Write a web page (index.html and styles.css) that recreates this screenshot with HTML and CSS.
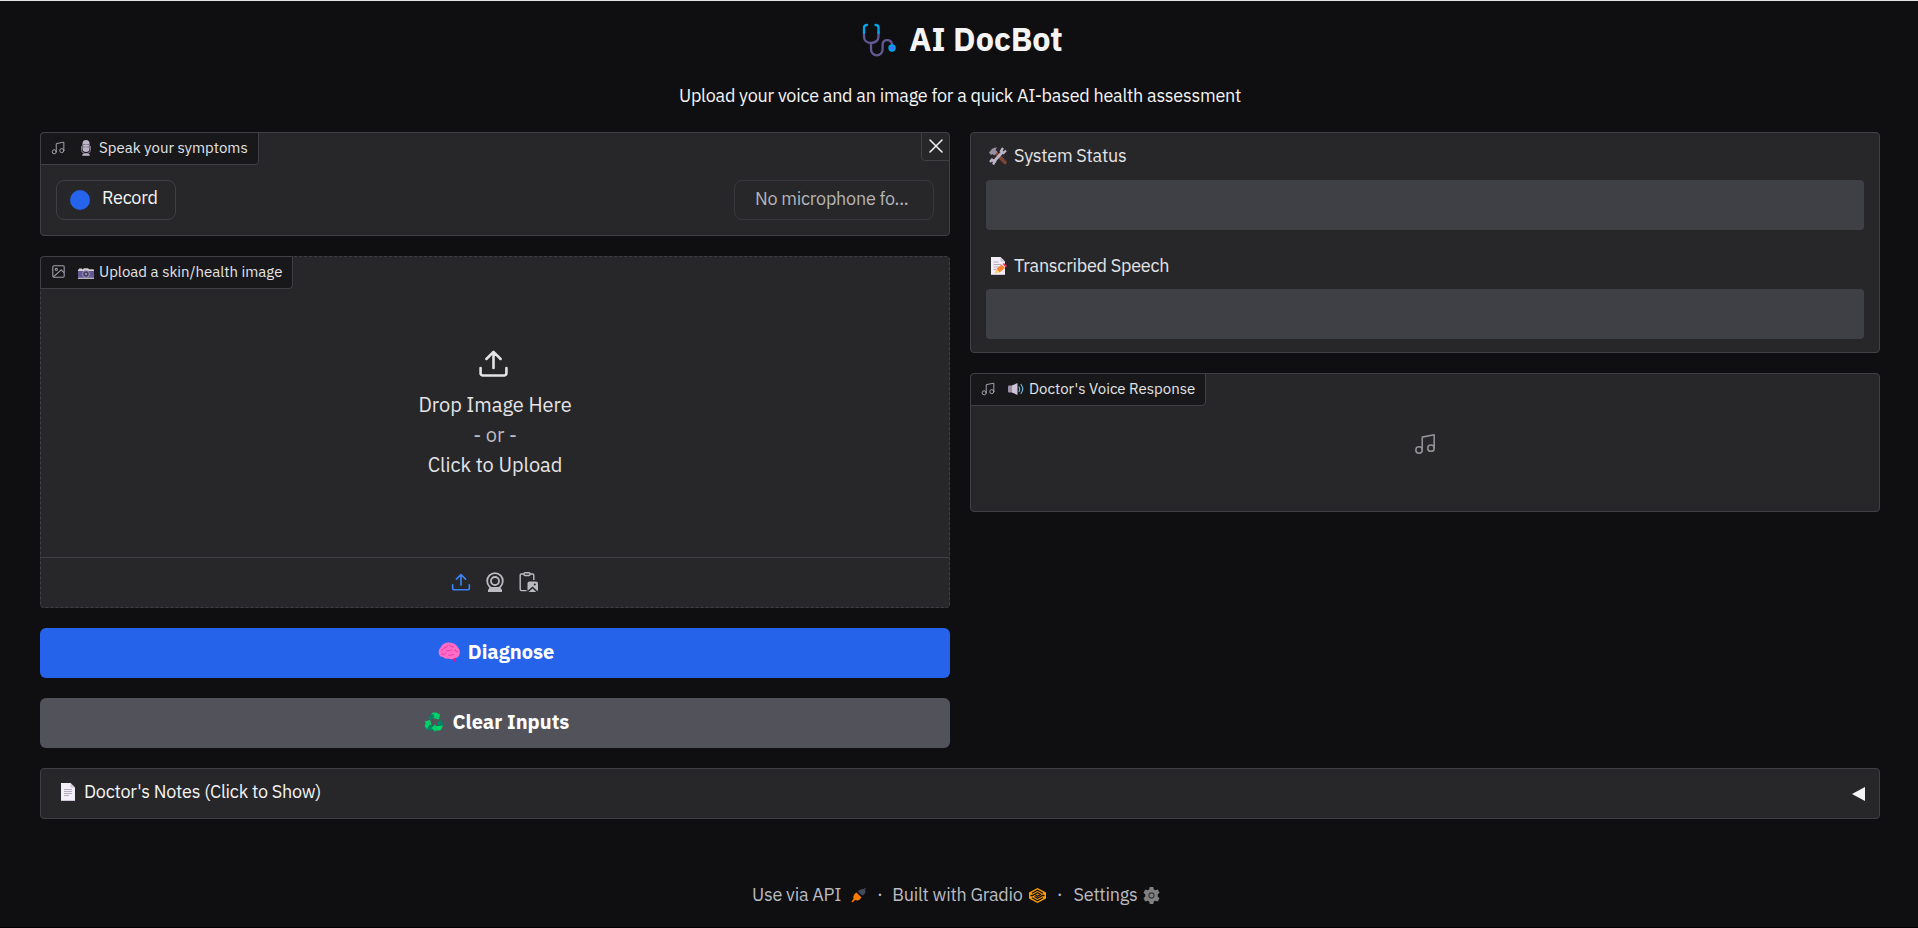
FILE: index.html
```
<!DOCTYPE html>
<html lang="en">
<head>
<meta charset="utf-8">
<title>AI DocBot</title>
<link rel="stylesheet" href="styles.css">
</head>
<body>
<svg class="defs" width="0" height="0">
  <symbol id="music" viewBox="0 0 24 24" fill="none" stroke="currentColor" stroke-width="1.700" stroke-linecap="round" stroke-linejoin="round"><path d="M9 18V4.500L22 2v14"/><circle cx="5.500" cy="18.500" r="3.500"/><circle cx="18.500" cy="16.500" r="3.500"/></symbol>
  <symbol id="upload" viewBox="0 0 24 24" fill="none" stroke="currentColor" stroke-width="2" stroke-linecap="round" stroke-linejoin="round"><path d="M12 15.500V3.200M6.500 8.500 12 3l5.500 5.500M2 15.500V19.500A1.800 1.800 0 0 0 3.800 21.300H20.200A1.800 1.800 0 0 0 22 19.500V15.500"/></symbol>
</svg>
<header class="header">
  <h1 class="title">
    <svg class="steth" viewBox="0 0 34 34" fill="none" stroke-width="2.300" stroke-linecap="round"><path stroke="#635994" d="M2 10v3.500C2 17.500 5 20 9 20S16.500 17.500 16.500 13.500V10M9 20.500v6a5.800 5.800 0 0 0 11.600 0V22c0-6 8-6.500 9.500-1"/><path stroke="#00a6ed" d="M5 2C3 2 2 3 2 4.500V10M13.500 2c2 0 3 1 3 2.500V10"/><circle cx="30" cy="25" r="2.800" fill="#4a6cff" stroke="#00a6ed" stroke-width="1.700"/></svg>
    <span>AI DocBot</span>
  </h1>
  <p class="subtitle"><span>Upload your voice and an image for a quick AI-based health assessment</span></p>
</header>
<main class="columns">
  <section class="column">
    <div class="block audio">
      <div class="label">
        <svg class="label-icon"><use href="#music"/></svg>
        <svg class="emoji" viewBox="0 0 16 16"><path fill="#7d7387" d="M3 6h1v3a4 4 0 0 0 8 0V6h1v3a5 5 0 0 1-4.300 5H11.500v2h-7v-2H7.300A5 5 0 0 1 3 9z"/><rect x="4.500" y="0" width="7" height="12" rx="3.500" fill="#bdb4c7"/><path stroke="#80768b" d="M4.500 4.500h3M8.500 4.500h3M4.500 7h3M8.500 7h3"/><path fill="#bdb4c7" d="M5.500 13.500h5l1.500 2H4z"/></svg>
        <span class="label-text">Speak your symptoms</span>
      </div>
      <button class="close"><svg viewBox="0 0 14 14" stroke="currentColor" stroke-width="1.500" stroke-linecap="round"><path d="M1 1l12 12M13 1 1 13"/></svg></button>
      <div class="controls">
        <button class="record"><i class="dot"></i><span>Record</span></button>
        <button class="mic"><span>No microphone fo...</span></button>
      </div>
    </div>
    <div class="block image">
      <div class="label">
        <svg class="label-icon image-icon" viewBox="0 0 24 24" fill="none" stroke="currentColor" stroke-width="2" stroke-linejoin="round"><rect x="1.500" y="1.500" width="21" height="21" rx="2"/><circle cx="8" cy="8" r="2"/><path d="M22 14l-5-5L2.500 22"/></svg>
        <svg class="emoji camera" viewBox="0 0 16 16"><path fill="#d3cfd8" d="M0 6.500V5q0-.7 1-.7V3.500h3v.8h1l1-1h4l1 1H15q1 0 1 1v1.200z"/><path fill="#635994" d="M0 6h16v7H0z"/><path fill="#e3dfe8" d="M0 12.800h16v1H0z"/><circle cx="8" cy="9" r="3.800" fill="#998ea4"/><circle cx="8" cy="9" r="2.700" fill="#433b6b"/><circle cx="8" cy="9" r="1.200" fill="#998ea4"/></svg>
        <span class="label-text">Upload a skin/health image</span>
      </div>
      <div class="dropzone">
        <svg class="drop-icon"><use href="#upload"/></svg>
        <span class="drop-line">Drop Image Here</span>
        <span class="drop-line or">- or -</span>
        <span class="drop-line">Click to Upload</span>
      </div>
      <div class="sources">
        <svg class="src active"><use href="#upload"/></svg>
        <svg class="src" viewBox="0 0 20 20" fill="none" stroke="currentColor" stroke-width="1.800"><circle cx="10" cy="9" r="7.800"/><circle cx="10" cy="9" r="4"/><path fill="currentColor" stroke="none" d="M5 15h10l2 3v2H3v-2z"/></svg>
        <svg class="src" viewBox="0 0 20 20" fill="none" stroke="currentColor" stroke-width="1.400"><path d="M5 2H2.500q-1.300 0-1.300 1.300v14q0 1.300 1.300 1.300h5M11 2h2.500q1.300 0 1.300 1.300V8"/><rect x="5" y=".7" width="6" height="2.800" rx="1"/><rect x="8.500" y="9.500" width="10.500" height="10.500" rx="2" fill="currentColor" stroke="none"/><path stroke="#27272a" stroke-width="1.600" d="M9 19.500l4.500-4 5 4.500"/><circle cx="15.700" cy="12.500" r="1" fill="#27272a" stroke="none"/></svg>
      </div>
    </div>
    <button class="action primary">
      <svg class="brain" viewBox="0 0 22 20"><path fill="#f70a8d" d="M13 15h5l-1.500 5q-1 0-1-1.500-.5-1.500-2.500-2z"/><path fill="#ff6dc6" d="M1 12Q-.5 8 3 5 5 .5 10.500.5q6 0 9 4 3 4 2 8-1 3.500-4.500 3.500-3 2-7 .5-3 1-5-1.500Q1.500 15 1 12z"/><path fill="none" stroke="#f430a8" stroke-width=".9" d="M3 8q2 0 3-2 3 0 4-3M11 3q2 2 5 2M8 8.500q4 1 6-1M17 7q0 3 3 3M3 12q3 1 5-1M10 13q3 1 6-1"/></svg>
      <span>Diagnose</span>
    </button>
    <button class="action secondary">
      <svg class="recycle" viewBox="0 0 20 20"><path fill="#008463" d="M6.500 3 8 1.500 10 4 7.500 8.500 4 6.500zM2 14l1.500-2 3.500 1.500h2V18.500H5q-2 0-3-2zM13.500 10l3.500-2 2.500 4-2.500 4-3-1.500z"/><path fill="#00d26a" d="M7 2.500Q8 .5 9.500.5h2.500q1.500 0 2.300 1.500l1.700-.5-1 6-6-1.500 1.500-1-1.500-3zM.5 9.500 6 8l1.500 5-2-.5-2.500 4.500L.5 14l1.300-2.700zM11.500 12v2H17l2-1-1.500 4q-.7 1.500-2.500 1.500h-3.500v1.500L7.500 16z"/></svg>
      <span>Clear Inputs</span>
    </button>
  </section>
  <section class="column">
    <div class="block status">
      <div class="field-label first">
        <svg class="field-icon" viewBox="0 0 18 18"><path stroke="#7d4533" stroke-width="3.500" stroke-linecap="round" d="M7 6l9 9.500"/><path fill="#998ea4" d="M0 5.500 3 2q2-2 5-1.500L6.500 3l2 2L5 8.500 3.500 7 2 8z"/><path stroke="#bdb4c7" stroke-width="2.800" d="M4 15.500 13.500 5" fill="none"/><path stroke="#bdb4c7" stroke-width="2.300" d="M17 3.500 14.500 6 12 4l2-3M1 15l2-2.500 3 2-2 3" fill="none"/></svg>
        <span>System Status</span>
      </div>
      <div class="field"></div>
      <div class="field-label second">
        <svg class="field-icon" viewBox="0 0 18 18"><path fill="#f3eef8" d="M2 0h9.500L16 4.500V18H2z"/><path fill="#cdc4d6" d="M11.500 0v4.500H16zM2 17h14v1H2z"/><path stroke="#b4acbc" d="M4.500 5h5M4.500 7.500H12M4.500 10H10M4.500 12.500H7"/><path fill="#ff822d" d="M7.500 12 12.500 7.500l3.500 3.500-5.500 4.500z"/><path fill="#ffce7c" d="M7.500 12l3 3.500-5 1z"/><path fill="#f92f60" d="M13.500 7 15 6l3 3-1.200 1.500z"/></svg>
        <span>Transcribed Speech</span>
      </div>
      <div class="field"></div>
    </div>
    <div class="block voice">
      <div class="label">
        <svg class="label-icon"><use href="#music"/></svg>
        <svg class="emoji" viewBox="0 0 16 16"><path fill="#998ea4" d="M0 5.500q0-1 1-1h4v7H1q-1 0-1-1z"/><path fill="#cdc4d6" d="M4 4.500 9.500 2v12L4 11.500z"/><path fill="none" stroke="#6eb5e0" stroke-width="1.200" stroke-linecap="round" d="M11 6q1.300 2 0 4.500M13 3.500q3.500 4.500 0 9"/></svg>
        <span class="label-text">Doctor's Voice Response</span>
      </div>
      <div class="empty"><svg><use href="#music"/></svg></div>
    </div>
  </section>
</main>
<div class="block notes">
  <svg class="page-icon" viewBox="0 0 14 18"><path fill="#f3eef8" d="M0 0h9.500L14 4.500V18H0z"/><path fill="#cdc4d6" d="M9.500 0v4.500H14zM0 17h14v1H0z"/><path stroke="#b4acbc" d="M3 6.500h8M3 8.500h8M3 10.500h8M3 12.500h5"/></svg>
  <span>Doctor's Notes (Click to Show)</span>
  <svg class="arrow" viewBox="0 0 13 14"><path fill="#f4f4f5" d="M13 0v14L0 7z"/></svg>
</div>
<footer class="footer">
  <span>Use via API</span>
  <svg class="rocket" viewBox="0 0 16 16"><path fill="#434a5c" d="M15.500.5 14 3q1.500 2.500-1.500 5L11 8.500 6.800 4.500Q9 1.500 12.500 2z"/><path fill="#ff7c00" d="M5.500 5.500l5 5q-2.500 4-6.500 2.500L1.500 15.500.5 14.500 2.500 12Q1.500 8 5.500 5.500z"/></svg>
  <span class="sep sep-a">·</span>
  <span>Built with Gradio</span>
  <svg class="gradio" viewBox="0 0 17 15"><path fill="#ff9d00" d="M8.500 0 17 4.500v6L8.500 15 0 10.500v-6z"/><path fill="none" stroke="#0f0f11" stroke-width="1.300" d="M3 5.200 8.500 2.300 14 5.200M3 9.800l5.500 2.900L14 9.800M1.500 7.500h2l5-2.700 3 1.700-3 1.700-2-1M15.500 7.500h-2l-5 2.700-3-1.700"/></svg>
  <span class="sep sep-b">·</span>
  <span>Settings</span>
  <svg class="gear" viewBox="0 0 24 24"><path fill="#808080" d="M9.500 0h5l.8 3.500 2 1.200 3.500-1L23.300 8l-2.600 2.600v2.800l2.600 2.600-2.500 4.300-3.500-1-2 1.200-.8 3.500h-5l-.8-3.500-2-1.200-3.500 1L.7 16l2.600-2.600v-2.800L.7 8l2.500-4.300 3.500 1 2-1.200z"/><circle cx="12" cy="12" r="3.700" fill="none" stroke="#35353a" stroke-width="1.500"/></svg>
</footer>
</body>
</html>
```
FILE: styles.css
```
* { box-sizing: border-box; }
body {
  margin: 0;
  height: 928px;
  overflow: hidden;
  padding: 0 38px 0 40px;
  border-top: 1px solid #dfe3e2;
  border-bottom: 1px solid #000;
  background: #0f0f11;
  color: #f4f4f5;
  font-family: "IBM Plex Sans", Roboto, "Liberation Sans", sans-serif;
  font-size: 18px;
  letter-spacing: -0.25px;
  display: flex;
  flex-direction: column;
}
.defs { position: absolute; }
svg { flex: none; display: block; }
span { white-space: nowrap; }
button { font: inherit; color: inherit; letter-spacing: inherit; padding: 0; }
.header { height: 131px; padding-top: 18px; }
.title { margin: 0 0 24px; height: 40px; line-height: 40px; font-size: 32.4px; letter-spacing: 0; font-weight: 700; display: flex; justify-content: center; gap: 13px; padding-left: 5px; }
.steth { width: 34px; height: 34px; margin-top: 4px; }
.subtitle { margin: 0; line-height: 26px; text-align: center; }
.columns { display: flex; gap: 20px; }
.column { flex: 1; display: flex; flex-direction: column; gap: 20px; }
.block { border: 1px solid #3f3f46; border-radius: 4px; background: #27272a; position: relative; display: flex; flex-direction: column; }
.label { align-self: flex-start; height: 33px; margin: -1px 0 0 -1px; padding: 0 10px 0 10px; border: 1px solid #3f3f46; border-radius: 4px 0 4px 0; background: #18181b; display: flex; align-items: center; font-size: 15px; letter-spacing: 0; color: #e4e4e7; }
.label-text { padding-bottom: 2px; }
.label-icon { width: 14px; height: 14px; color: #a1a1aa; margin: 0 13px 2px 0; }
.image-icon { width: 13px; height: 13px; margin-left: 1px; }
.emoji { width: 16px; height: 16px; margin-right: 5px; margin-bottom: 1px; }
.camera { margin-top: 1px; margin-bottom: 0; }
.audio { height: 104px; }
.close { position: absolute; top: -1px; right: -1px; width: 29px; height: 29px; border: 1px solid #3f3f46; border-radius: 0 4px 0 4px; background: #27272a; display: flex; align-items: center; justify-content: center; padding-bottom: 1px; }
.close svg { width: 14px; height: 14px; }
.controls { display: flex; justify-content: space-between; padding: 15px 15px 0; }
.record, .mic { height: 40px; border: 1px solid #3f3f46; border-radius: 8px; background: #27272a; display: flex; align-items: center; }
.record { width: 120px; padding: 0 0 4px 13px; gap: 12px; }
.record span { padding-bottom: 1px; }
.dot { width: 20px; height: 20px; border-radius: 50%; background: #2563eb; margin-top: 4px; }
.mic { width: 200px; padding: 0 0 3px 20px; border-color: #38383d; color: #b4b4b8; }
.image { height: 352px; border-style: dashed; }
.dropzone { flex: 1; display: flex; flex-direction: column; align-items: center; }
.drop-icon { width: 31px; height: 31px; margin: 59px 4px 11px 0; color: #e4e4e7; }
.drop-line { font-size: 20px; letter-spacing: -0.04px; line-height: 30px; color: #e4e4e7; }
.or { color: #bbbbc2; }
.sources { height: 50px; border-top: 1px solid #3f3f46; display: flex; align-items: center; justify-content: center; gap: 14px; color: #bbbbc2; padding: 0 1px 2px 0; }
.src { width: 20px; height: 20px; }
.active { color: #3b82f6; }
.action { height: 50px; border: 0; border-radius: 6px; display: flex; align-items: center; justify-content: center; font-size: 20px; letter-spacing: 0; font-weight: 700; color: #fff; padding-bottom: 3px; }
.primary { background: #2563eb; padding-left: 2px; }
.secondary { background: #52525b; padding-left: 3px; }
.brain { width: 22px; height: 20px; margin-right: 8px; }
.recycle { width: 20px; height: 20px; margin-right: 9px; }
.status { height: 221px; padding: 10px 15px 0; }
.field-label { display: flex; align-items: flex-start; line-height: 26px; color: #e4e4e7; padding-left: 3px; }
.first { height: 37px; }
.second { height: 36px; margin-top: 23px; }
.field-icon { width: 18px; height: 18px; margin: 4px 7px 0 0; }
.field { height: 50px; border-radius: 4px; background: #3f3f46; }
.voice { height: 139px; }
.empty { color: #939397; display: flex; justify-content: center; padding-top: 27px; }
.empty svg { width: 22px; height: 22px; }
.notes { margin-top: 20px; height: 51px; flex-direction: row; align-items: center; padding: 0 14px 4px 20px; }
.page-icon { width: 14px; height: 18px; margin-right: 9px; }
.arrow { width: 13px; height: 14px; margin: 4px 0 0 auto; }
.footer { margin-top: 63px; height: 26px; line-height: 26px; display: flex; align-items: center; padding-left: 712px; color: #bbbbc2; }
.rocket { width: 16px; height: 16px; margin-left: 10px; }
.sep { text-align: center; }
.sep-a { width: 25px; }
.sep-b { width: 28px; }
.gradio { width: 17px; height: 15px; margin-left: 6px; }
.gear { width: 17px; height: 17px; margin-left: 6px; }
```
